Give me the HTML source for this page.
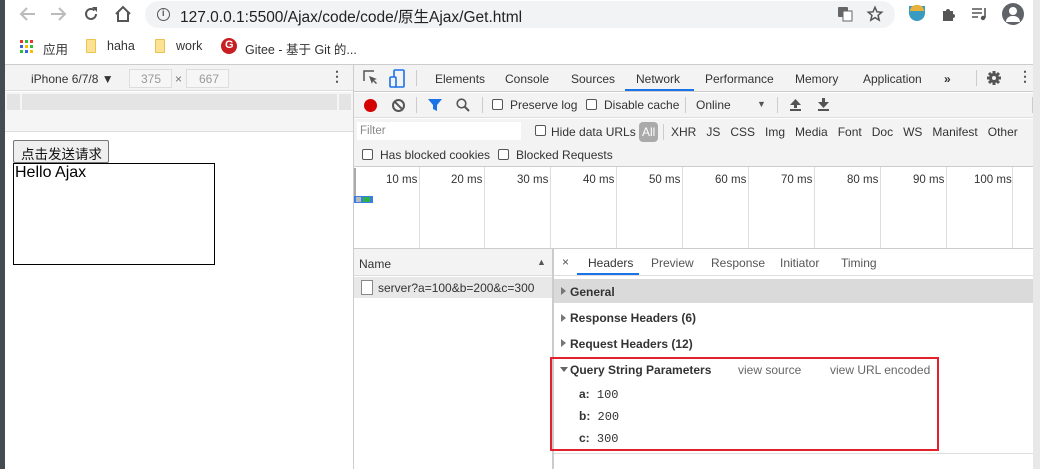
<!DOCTYPE html>
<html><head><meta charset="utf-8"><style>
*{margin:0;padding:0;box-sizing:border-box}
body{width:1040px;height:469px;overflow:hidden;position:relative;background:#fff;font-family:"Liberation Sans","Noto Sans CJK SC",sans-serif;font-size:12px;color:#333}
.a{position:absolute}
.t{position:absolute;white-space:nowrap}
.cb{position:absolute;width:11px;height:11px;border:1px solid #555;border-radius:2px;background:#fff}
.tab{position:absolute;top:72px;font-size:12px;color:#333}
.ms{position:absolute;top:174px;font-size:11.5px;color:#333}
.vl{position:absolute;top:167px;width:1px;height:81px;background:#ddd}
.hd{font-weight:bold;font-size:12px;color:#333}
.tri{position:absolute;width:0;height:0;border-top:4px solid transparent;border-bottom:4px solid transparent;border-left:5px solid #777}
</style></head><body>
<div class="a" style="left:0;top:0;width:5px;height:469px;background:#444c52"></div>
<div class="a" style="left:1033px;top:0;width:7px;height:469px;background:#e8e8e8"></div>
<!-- top bar -->
<svg class="a" style="left:18px;top:6px" width="18" height="16" viewBox="0 0 18 16"><path d="M17 8H3M9 2L3 8l6 6" fill="none" stroke="#bbb" stroke-width="2"/></svg>
<svg class="a" style="left:50px;top:6px" width="18" height="16" viewBox="0 0 18 16"><path d="M1 8h14M9 2l6 6-6 6" fill="none" stroke="#bbb" stroke-width="2"/></svg>
<svg class="a" style="left:82px;top:5px" width="18" height="18" viewBox="0 0 18 18"><path d="M14 9a5 5 0 1 1-1.5-3.6" fill="none" stroke="#555" stroke-width="2"/><path d="M10 2h5v5z" fill="#555"/></svg>
<svg class="a" style="left:113px;top:4px" width="20" height="20" viewBox="0 0 20 20"><path d="M3 10L10 3l7 7M5 8v9h10V8" fill="none" stroke="#555" stroke-width="2"/></svg>
<div class="a" style="left:145px;top:1px;width:750px;height:27px;border-radius:14px;background:#f1f3f4"></div>
<div class="a" style="left:157px;top:8px;width:13px;height:13px;border:1.5px solid #555;border-radius:50%"></div>
<div class="t" style="left:162px;top:8px;font-size:9px;font-weight:bold;color:#555">i</div>
<div class="t" style="left:180px;top:5px;font-size:15.5px;color:#222">127.0.0.1:5500/Ajax/code/code/原生Ajax/Get.html</div>
<svg class="a" style="left:838px;top:7px" width="15" height="15"><rect x="0" y="0" width="10" height="10" fill="#666" rx="1"/><rect x="5" y="4" width="9" height="10" fill="#fff" stroke="#666"/></svg>
<svg class="a" style="left:866px;top:5px" width="18" height="18" viewBox="0 0 24 24"><path d="M12 3l2.6 6.1 6.4.5-4.9 4.2 1.5 6.4L12 16.8 6.4 20.2l1.5-6.4L3 9.6l6.4-.5z" fill="none" stroke="#555" stroke-width="2"/></svg>
<div class="a" style="left:909px;top:6px;width:16px;height:15px;border-radius:0 0 8px 8px;background:#3a9bc0"></div>
<div class="a" style="left:910px;top:5px;width:14px;height:6px;border-radius:6px 6px 0 0;background:#e8b23a"></div>
<svg class="a" style="left:942px;top:7px" width="14" height="14" viewBox="0 0 14 14"><path d="M1 4h3a2 2 0 1 1 4 0h3v3a2 2 0 1 1 0 4v3H1z" fill="#555"/></svg>
<svg class="a" style="left:972px;top:7px" width="16" height="14"><path d="M0 2h10M0 6h10M0 10h6" stroke="#555" stroke-width="1.6"/><path d="M13 1v10" stroke="#555" stroke-width="1.6"/><circle cx="11" cy="11" r="2.2" fill="#555"/></svg>
<div class="a" style="left:1002px;top:3px;width:22px;height:22px;border-radius:50%;background:#5f6368"></div>
<div class="a" style="left:1009px;top:7px;width:8px;height:8px;border-radius:50%;background:#fff"></div>
<div class="a" style="left:1006px;top:16px;width:14px;height:6px;border-radius:7px 7px 0 0;background:#fff"></div>
<!-- bookmarks -->
<svg class="a" style="left:20px;top:40px" width="13" height="13"><rect x="0" y="0" width="3" height="3" fill="#e33"/><rect x="5" y="0" width="3" height="3" fill="#3b3"/><rect x="10" y="0" width="3" height="3" fill="#e33"/><rect x="0" y="5" width="3" height="3" fill="#36d"/><rect x="5" y="5" width="3" height="3" fill="#fb0"/><rect x="10" y="5" width="3" height="3" fill="#3b3"/><rect x="0" y="10" width="3" height="3" fill="#3b3"/><rect x="5" y="10" width="3" height="3" fill="#36d"/><rect x="10" y="10" width="3" height="3" fill="#fb0"/></svg>
<div class="t" style="left:43px;top:39px;font-size:12.5px;color:#333">应用</div>
<div class="a" style="left:86px;top:39px;width:10px;height:14px;background:#fde293;border:1px solid #e9c44f;border-radius:1px"></div>
<div class="t" style="left:107px;top:39px;font-size:12.5px;color:#333">haha</div>
<div class="a" style="left:155px;top:39px;width:10px;height:14px;background:#fde293;border:1px solid #e9c44f;border-radius:1px"></div>
<div class="t" style="left:176px;top:39px;font-size:12.5px;color:#333">work</div>
<div class="a" style="left:221px;top:38px;width:16px;height:16px;border-radius:50%;background:#c71d23"></div>
<div class="t" style="left:225px;top:39px;font-size:11px;font-weight:bold;color:#fff">G</div>
<div class="t" style="left:245px;top:39px;font-size:12.5px;color:#333">Gitee - 基于 Git 的...</div>
<div class="a" style="left:5px;top:64px;width:1028px;height:1px;background:#ccc"></div>
<!-- device toolbar -->
<div class="a" style="left:5px;top:65px;width:348px;height:26px;background:#f3f3f3;border-bottom:1px solid #ddd"></div>
<div class="t" style="left:31px;top:72px;font-size:12px;color:#333">iPhone 6/7/8 ▼</div>
<div class="a" style="left:129px;top:69px;width:43px;height:19px;border:1px solid #ddd;background:#f6f6f6"></div>
<div class="t" style="left:141px;top:72px;font-size:12px;color:#999">375</div>
<div class="t" style="left:175px;top:72px;font-size:12px;color:#777">×</div>
<div class="a" style="left:186px;top:69px;width:43px;height:19px;border:1px solid #ddd;background:#f6f6f6"></div>
<div class="t" style="left:199px;top:72px;font-size:12px;color:#999">667</div>
<div class="t" style="left:330px;top:68px;font-size:14px;color:#555;font-weight:bold">⋮</div>
<div class="a" style="left:5px;top:92px;width:348px;height:40px;background:#f5f5f5;border-bottom:1px solid #ddd"></div>
<div class="a" style="left:7px;top:94px;width:344px;height:16px;background:#e4e4e4"></div>
<div class="a" style="left:20px;top:94px;width:2px;height:16px;background:#f5f5f5"></div>
<div class="a" style="left:337px;top:94px;width:2px;height:16px;background:#f5f5f5"></div>
<!-- page -->
<div class="a" style="left:13px;top:140px;width:96px;height:23px;border:1px solid #767676;border-radius:2px;background:#efefef"></div>
<div class="t" style="left:21px;top:143px;font-size:13.5px;color:#111">点击发送请求</div>
<div class="a" style="left:13px;top:163px;width:202px;height:102px;border:1px solid #000"></div>
<div class="t" style="left:15px;top:164px;font-size:16px;color:#000">Hello Ajax</div>
<!-- devtools -->
<div class="a" style="left:353px;top:65px;width:1px;height:404px;background:#ccc"></div>
<div class="a" style="left:354px;top:65px;width:679px;height:27px;background:#f3f3f3;border-bottom:1px solid #ccc"></div>
<svg class="a" style="left:363px;top:70px" width="16" height="16"><path d="M1 11V1h10" fill="none" stroke="#555" stroke-width="1.5"/><path d="M6 6l8 3-3 1 3 3-1 1-3-3-1 3z" fill="#555"/></svg>
<svg class="a" style="left:389px;top:69px" width="16" height="19"><rect x="5" y="1" width="10" height="17" rx="1" fill="none" stroke="#1a73e8" stroke-width="1.6"/><rect x="1" y="8" width="6" height="10" rx="1" fill="#f3f3f3" stroke="#1a73e8" stroke-width="1.6"/></svg>
<div class="a" style="left:416px;top:70px;width:1px;height:16px;background:#ccc"></div>
<div class="tab" style="left:435px">Elements</div>
<div class="tab" style="left:505px">Console</div>
<div class="tab" style="left:571px">Sources</div>
<div class="tab" style="left:636px">Network</div>
<div class="a" style="left:625px;top:89px;width:69px;height:2px;background:#1a73e8"></div>
<div class="tab" style="left:705px">Performance</div>
<div class="tab" style="left:795px">Memory</div>
<div class="tab" style="left:863px">Application</div>
<div class="tab" style="left:944px;font-weight:bold">»</div>
<div class="a" style="left:976px;top:70px;width:1px;height:16px;background:#ccc"></div>
<svg class="a" style="left:987px;top:71px" width="14" height="14" viewBox="0 0 14 14"><circle cx="7" cy="7" r="5" fill="#555"/><path d="M7 0v14M0 7h14M2 2l10 10M12 2L2 12" stroke="#555" stroke-width="3"/><circle cx="7" cy="7" r="2" fill="#f3f3f3"/></svg>
<div class="t" style="left:1018px;top:68px;font-size:14px;color:#555;font-weight:bold">⋮</div>
<!-- network toolbar -->
<div class="a" style="left:354px;top:93px;width:679px;height:25px;background:#f3f3f3;border-bottom:1px solid #ddd"></div>
<div class="a" style="left:364px;top:99px;width:13px;height:13px;border-radius:50%;background:#d50000"></div>
<div class="a" style="left:392px;top:99px;width:13px;height:13px;border-radius:50%;border:2px solid #555"></div>
<div class="a" style="left:393px;top:104px;width:10px;height:2px;background:#555;transform:rotate(45deg)"></div>
<div class="a" style="left:416px;top:97px;width:1px;height:16px;background:#ccc"></div>
<svg class="a" style="left:428px;top:99px" width="14" height="13"><path d="M0 0h14L9 6v6L5 10V6z" fill="#1a73e8"/></svg>
<svg class="a" style="left:456px;top:98px" width="14" height="14"><circle cx="5.5" cy="5.5" r="4.3" fill="none" stroke="#555" stroke-width="1.6"/><path d="M8.5 8.5L13 13" stroke="#555" stroke-width="2"/></svg>
<div class="a" style="left:482px;top:97px;width:1px;height:16px;background:#ccc"></div>
<div class="cb" style="left:492px;top:99px"></div>
<div class="t" style="left:510px;top:98px">Preserve log</div>
<div class="cb" style="left:586px;top:99px"></div>
<div class="t" style="left:604px;top:98px">Disable cache</div>
<div class="a" style="left:685px;top:97px;width:1px;height:16px;background:#ccc"></div>
<div class="t" style="left:696px;top:98px">Online</div>
<div class="t" style="left:757px;top:99px;font-size:9px;color:#555">▼</div>
<div class="a" style="left:777px;top:97px;width:1px;height:16px;background:#ccc"></div>
<svg class="a" style="left:789px;top:98px" width="13" height="13"><path d="M1 7l5.5-6L12 7H8v3H5V7z" fill="#555"/><rect x="1" y="11" width="11" height="2" fill="#555"/></svg>
<svg class="a" style="left:817px;top:98px" width="13" height="13"><path d="M1 4l5.5 6L12 4H8V0H5v4z" fill="#555"/><rect x="1" y="11" width="11" height="2" fill="#555"/></svg>
<div class="a" style="left:1032px;top:97px;width:1px;height:16px;background:#ccc"></div>
<!-- filter rows -->
<div class="a" style="left:354px;top:119px;width:679px;height:48px;background:#f3f3f3;border-bottom:1px solid #ccc"></div>
<div class="a" style="left:357px;top:122px;width:164px;height:18px;background:#fff"></div>
<div class="t" style="left:360px;top:125px;color:#888;font-size:11.5px">Filter</div>
<div class="cb" style="left:535px;top:125px"></div>
<div class="t" style="left:551px;top:125px">Hide data URLs</div>
<div class="a" style="left:639px;top:122px;width:19px;height:20px;border-radius:4px;background:#aaa"></div>
<div class="t" style="left:642px;top:125px;color:#fff">All</div>
<div class="a" style="left:663px;top:124px;width:1px;height:16px;background:#ccc"></div>
<div class="t" style="left:671px;top:125px">XHR&nbsp;&nbsp; JS&nbsp;&nbsp; CSS&nbsp;&nbsp; Img&nbsp;&nbsp; Media&nbsp;&nbsp; Font&nbsp;&nbsp; Doc&nbsp;&nbsp; WS&nbsp;&nbsp; Manifest&nbsp;&nbsp; Other</div>
<div class="cb" style="left:362px;top:149px"></div>
<div class="t" style="left:380px;top:148px">Has blocked cookies</div>
<div class="cb" style="left:498px;top:149px"></div>
<div class="t" style="left:516px;top:148px">Blocked Requests</div>
<!-- timeline -->
<div class="a" style="left:354px;top:168px;width:2px;height:30px;background:#aaa"></div>
<div class="vl" style="left:419px"></div><div class="vl" style="left:484px"></div><div class="vl" style="left:550px"></div><div class="vl" style="left:616px"></div><div class="vl" style="left:682px"></div><div class="vl" style="left:748px"></div><div class="vl" style="left:814px"></div><div class="vl" style="left:880px"></div><div class="vl" style="left:946px"></div><div class="vl" style="left:1012px"></div>
<div class="ms" style="left:386px">10 ms</div><div class="ms" style="left:451px">20 ms</div><div class="ms" style="left:517px">30 ms</div><div class="ms" style="left:583px">40 ms</div><div class="ms" style="left:649px">50 ms</div><div class="ms" style="left:715px">60 ms</div><div class="ms" style="left:781px">70 ms</div><div class="ms" style="left:847px">80 ms</div><div class="ms" style="left:913px">90 ms</div><div class="ms" style="left:974px">100 ms</div>
<div class="a" style="left:354px;top:196px;width:19px;height:7px;background:#3b7de0"></div>
<div class="a" style="left:356px;top:197px;width:5px;height:5px;background:#bbb"></div>
<div class="a" style="left:363px;top:197px;width:7px;height:5px;background:#2cb34a"></div>
<div class="a" style="left:354px;top:248px;width:679px;height:1px;background:#ccc"></div>
<!-- name column -->
<div class="a" style="left:354px;top:249px;width:198px;height:27px;background:#f3f3f3;border-bottom:1px solid #ddd"></div>
<div class="t" style="left:359px;top:257px">Name</div>
<div class="t" style="left:537px;top:257px;font-size:9px;color:#555">▲</div>
<div class="a" style="left:354px;top:277px;width:198px;height:21px;background:#e8e8e8"></div>
<div class="a" style="left:361px;top:280px;width:12px;height:15px;border:1px solid #888;background:#fff"></div>
<div class="t" style="left:378px;top:281px">server?a=100&amp;b=200&amp;c=300</div>
<div class="a" style="left:552px;top:249px;width:2px;height:220px;background:#ccc"></div>
<!-- details -->
<div class="a" style="left:554px;top:249px;width:479px;height:27px;border-bottom:1px solid #ddd;background:#fff"></div>
<div class="t" style="left:562px;top:255px;color:#555">×</div>
<div class="t" style="left:588px;top:256px">Headers</div>
<div class="a" style="left:577px;top:273px;width:62px;height:2px;background:#1a73e8"></div>
<div class="t" style="left:651px;top:256px;color:#555">Preview</div>
<div class="t" style="left:711px;top:256px;color:#555">Response</div>
<div class="t" style="left:780px;top:256px;color:#555">Initiator</div>
<div class="t" style="left:841px;top:256px;color:#555">Timing</div>
<div class="a" style="left:554px;top:279px;width:479px;height:24px;background:#dadada"></div>
<div class="tri" style="left:561px;top:287px"></div><div class="t hd" style="left:570px;top:285px">General</div>
<div class="tri" style="left:561px;top:314px"></div><div class="t hd" style="left:570px;top:311px">Response Headers (6)</div>
<div class="tri" style="left:561px;top:339px"></div><div class="t hd" style="left:570px;top:337px">Request Headers (12)</div>
<div class="a" style="left:560px;top:367px;width:0;height:0;border-left:4px solid transparent;border-right:4px solid transparent;border-top:5px solid #666"></div>
<div class="t hd" style="left:570px;top:363px">Query String Parameters</div>
<div class="t" style="left:738px;top:363px;color:#666">view source</div>
<div class="t" style="left:830px;top:363px;color:#666">view URL encoded</div>
<div class="t" style="left:579px;top:387px;font-family:'Liberation Mono',monospace;font-size:12px"><b style="font-family:'Liberation Sans',sans-serif">a:</b> 100</div>
<div class="t" style="left:579px;top:409px;font-family:'Liberation Mono',monospace;font-size:12px"><b style="font-family:'Liberation Sans',sans-serif">b:</b> 200</div>
<div class="t" style="left:579px;top:431px;font-family:'Liberation Mono',monospace;font-size:12px"><b style="font-family:'Liberation Sans',sans-serif">c:</b> 300</div>
<div class="a" style="left:550px;top:357px;width:389px;height:94px;border:2px solid #e5202e"></div>
<div class="a" style="left:554px;top:453px;width:479px;height:1px;background:#ddd"></div>
</body></html>
